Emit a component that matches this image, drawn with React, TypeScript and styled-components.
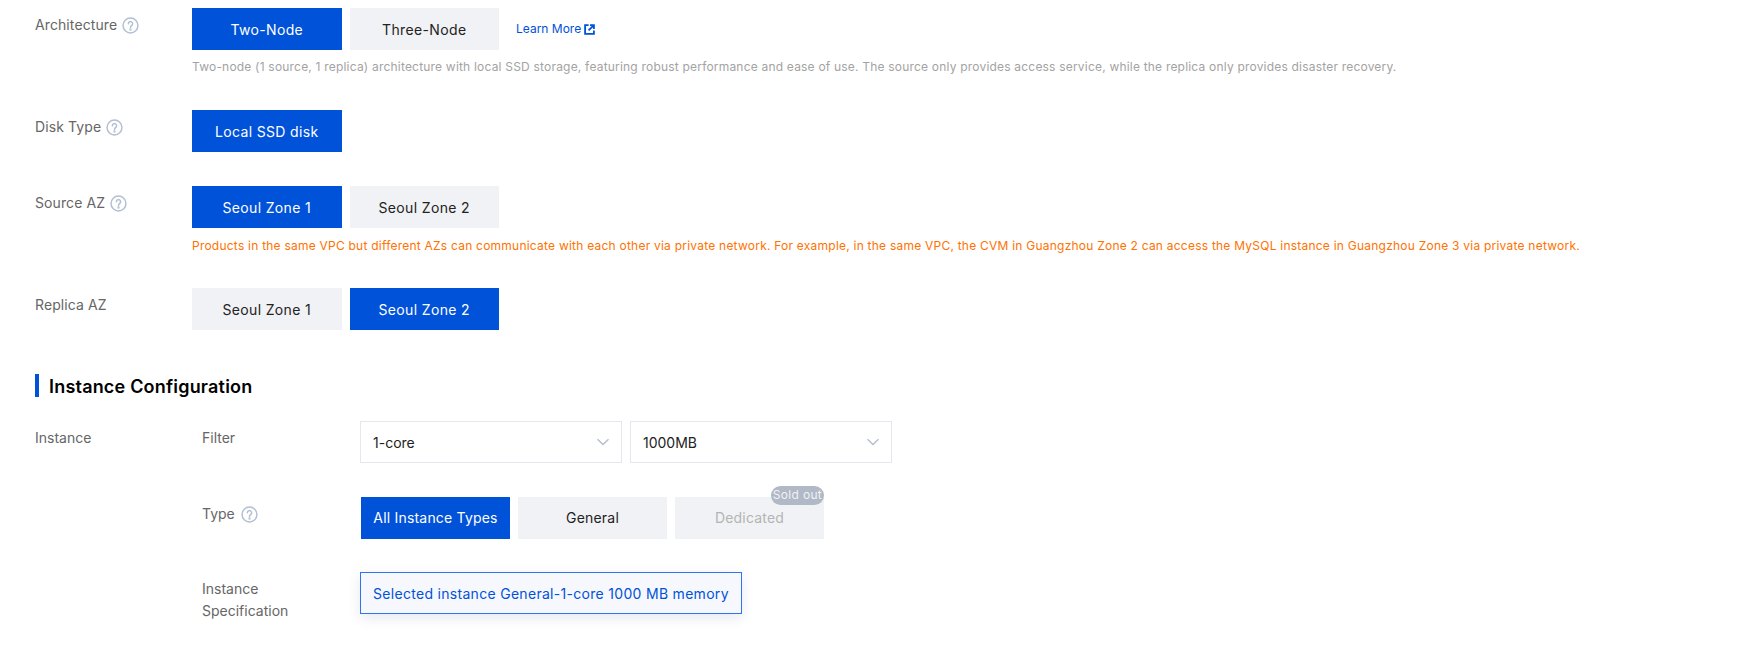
import React from 'react';
import styled, { createGlobalStyle } from 'styled-components';

const GlobalStyle = createGlobalStyle`
	html, body {
		margin: 0;
		padding: 0;
		background: #ffffff;
		font-family: Inter, "Noto Sans", "Liberation Sans", sans-serif;
		font-size: 14px;
		overflow: hidden;
	}
`;

const HelpIcon = () => (
	<HelpSvg viewBox="0 0 16 16" fill="none" stroke="#b3bfd2" strokeWidth="1.4" strokeLinecap="round">
		<circle cx="8" cy="8" r="7" />
		<path d="M6 6.3a2 2 0 1 1 3.2 1.6c-.8.6-1.2 1-1.2 1.9" />
		<circle cx="8" cy="11.8" r=".4" />
	</HelpSvg>
);

const ExternalIcon = () => (
	<svg width="11" height="11" viewBox="0 0 12 12" fill="none" stroke="#0052d9" strokeWidth="2">
		<path d="M5 1.2H1.2v9.6h9.6V7" />
		<path d="M6.5 1.2h4.3v4.3M10.8 1.2 5 7" />
	</svg>
);

const Chevron = () => (
	<ChevronSvg viewBox="0 0 14 8" fill="none" stroke="#b5bdcb" strokeWidth="1.4">
		<path d="M1.5 1.2 7 6.5l5.5-5.3" />
	</ChevronSvg>
);

const App = () => {
	return (
		<Page>
			<GlobalStyle />
			<Row>
				<Label>
					Architecture <HelpIcon />
				</Label>
				<Field>
					<Options>
						<Option $active>Two-Node</Option>
						<Option>Three-Node</Option>
						<LearnMore>
							Learn More <ExternalIcon />
						</LearnMore>
					</Options>
					<Hint>
						Two-node (1 source, 1 replica) architecture with local SSD storage, featuring robust performance and ease of use. The source only provides access service, while the replica only provides disaster recovery.
					</Hint>
				</Field>
			</Row>
			<Row $tall>
				<Label>
					Disk Type <HelpIcon />
				</Label>
				<Field>
					<Options>
						<Option $active>Local SSD disk</Option>
					</Options>
				</Field>
			</Row>
			<Row>
				<Label>
					Source AZ <HelpIcon />
				</Label>
				<Field>
					<Options>
						<Option $active>Seoul Zone 1</Option>
						<Option>Seoul Zone 2</Option>
					</Options>
					<WarningHint>
						Products in the same VPC but different AZs can communicate with each other via private network. For example, in the same VPC, the CVM in Guangzhou Zone 2 can access the MySQL instance in Guangzhou Zone 3 via private network.
					</WarningHint>
				</Field>
			</Row>
			<Row>
				<Label>Replica AZ</Label>
				<Field>
					<Options>
						<Option>Seoul Zone 1</Option>
						<Option $active>Seoul Zone 2</Option>
					</Options>
				</Field>
			</Row>

			<SectionTitle>Instance Configuration</SectionTitle>

			<InstanceRow>
				<InstanceLabel>Instance</InstanceLabel>
				<InstanceBody>
					<SubRow>
						<SubLabel>Filter</SubLabel>
						<Selects>
							<SelectBox>
								1-core
								<Chevron />
							</SelectBox>
							<SelectBox>
								1000MB
								<Chevron />
							</SelectBox>
						</Selects>
					</SubRow>
					<SubRow>
						<SubLabel>
							Type <HelpIcon />
						</SubLabel>
						<TypeOptions>
							<TypeOption $active>All Instance Types</TypeOption>
							<TypeOption>General</TypeOption>
							<TypeOption $disabled>
								Dedicated
								<SoldOut>Sold out</SoldOut>
							</TypeOption>
						</TypeOptions>
					</SubRow>
					<SubRow>
						<SubLabel>
							Instance
							<br />
							Specification
						</SubLabel>
						<SelectedSpec>Selected instance General-1-core 1000 MB memory</SelectedSpec>
					</SubRow>
				</InstanceBody>
			</InstanceRow>
		</Page>
	);
};

export default App;

// styles
const Page = styled.div`
	width: 1762px;
	height: 652px;
	box-sizing: border-box;
	padding: 8px 0 0 35px;
	overflow: hidden;
`;

const Row = styled.div<{ $tall?: boolean }>`
	display: flex;
	margin-bottom: ${(p) => (p.$tall ? '34px' : '33px')};
`;

const Label = styled.div`
	display: flex;
	align-items: center;
	gap: 5px;
	flex: none;
	width: 157px;
	height: 20px;
	margin-top: 7px;
	color: #666666;
	font-size: 14px;
	line-height: 20px;
	letter-spacing: 0.1px;
`;

const HelpSvg = styled.svg`
	width: 17px;
	height: 17px;
	flex: none;
`;

const Field = styled.div`
	display: flex;
	flex-direction: column;
`;

const Options = styled.div`
	display: flex;
	align-items: flex-start;
	gap: 8px;
`;

const Option = styled.div<{ $active?: boolean; $disabled?: boolean }>`
	position: relative;
	display: flex;
	align-items: center;
	justify-content: center;
	box-sizing: border-box;
	width: 149.5px;
	height: 42px;
	background: ${(p) => (p.$active ? '#0052d9' : '#f1f2f5')};
	color: ${(p) => (p.$active ? '#ffffff' : p.$disabled ? '#b4b4b4' : '#222222')};
	font-size: 14px;
	letter-spacing: 0.35px;
	white-space: nowrap;
`;

const TypeOption = styled(Option)`
	width: 149px;
	letter-spacing: 0.2px;
`;

const LearnMore = styled.a`
	display: flex;
	align-items: center;
	gap: 3px;
	margin: 12px 0 0 9px;
	color: #0052d9;
	font-size: 12px;
	line-height: 18px;
`;

const Hint = styled.div`
	margin-top: 7px;
	color: #a3a3a3;
	font-size: 12px;
	line-height: 20px;
	letter-spacing: 0.2px;
	white-space: nowrap;
`;

const WarningHint = styled(Hint)`
	margin-top: 8px;
	margin-bottom: -1px;
	color: #ff7200;
	letter-spacing: 0.23px;
`;

const SectionTitle = styled.h2`
	height: 23px;
	margin: 44px 0 24px;
	padding-left: 10px;
	border-left: 4px solid #0052d9;
	color: #000000;
	font-size: 18px;
	font-weight: 600;
	line-height: 25px;
	letter-spacing: 0.2px;
`;

const InstanceRow = styled.div`
	display: flex;
`;

const InstanceLabel = styled.div`
	flex: none;
	width: 167px;
	margin-top: 6px;
	color: #666666;
	line-height: 22px;
`;

const InstanceBody = styled.div`
	display: flex;
	flex-direction: column;
	gap: 33.5px;
`;

const SubRow = styled.div`
	display: flex;
`;

const SubLabel = styled.div`
	display: block;
	flex: none;
	width: 158px;
	margin-top: 6px;
	color: #666666;
	line-height: 22px;

	svg {
		vertical-align: -4px;
		margin-left: 2px;
	}
`;

const Selects = styled.div`
	display: flex;
	gap: 8px;
`;

const SelectBox = styled.div`
	display: flex;
	align-items: center;
	justify-content: space-between;
	box-sizing: border-box;
	width: 262px;
	height: 42px;
	padding: 0 11px 0 12px;
	border: 1px solid #e4e7ee;
	color: #222222;
`;

const ChevronSvg = styled.svg`
	width: 14px;
	height: 8px;
	flex: none;
`;

const TypeOptions = styled(Options)`
	margin-left: 1px;
`;

const SoldOut = styled.span`
	position: absolute;
	top: -11px;
	right: 0;
	padding: 0 2px;
	height: 19px;
	border-radius: 10px;
	background: #b1b8c6;
	color: #f1f2f5;
	font-size: 12px;
	line-height: 18px;
	letter-spacing: 0.3px;
`;

const SelectedSpec = styled.div`
	display: flex;
	align-items: center;
	box-sizing: border-box;
	height: 42px;
	padding: 0 12px;
	border: 1px solid #2f74ee;
	background: #f6f8fd;
	color: #0052d9;
	letter-spacing: 0.3px;
	box-shadow: 0 4px 12px rgba(0, 40, 120, 0.1);
	white-space: nowrap;
`;
